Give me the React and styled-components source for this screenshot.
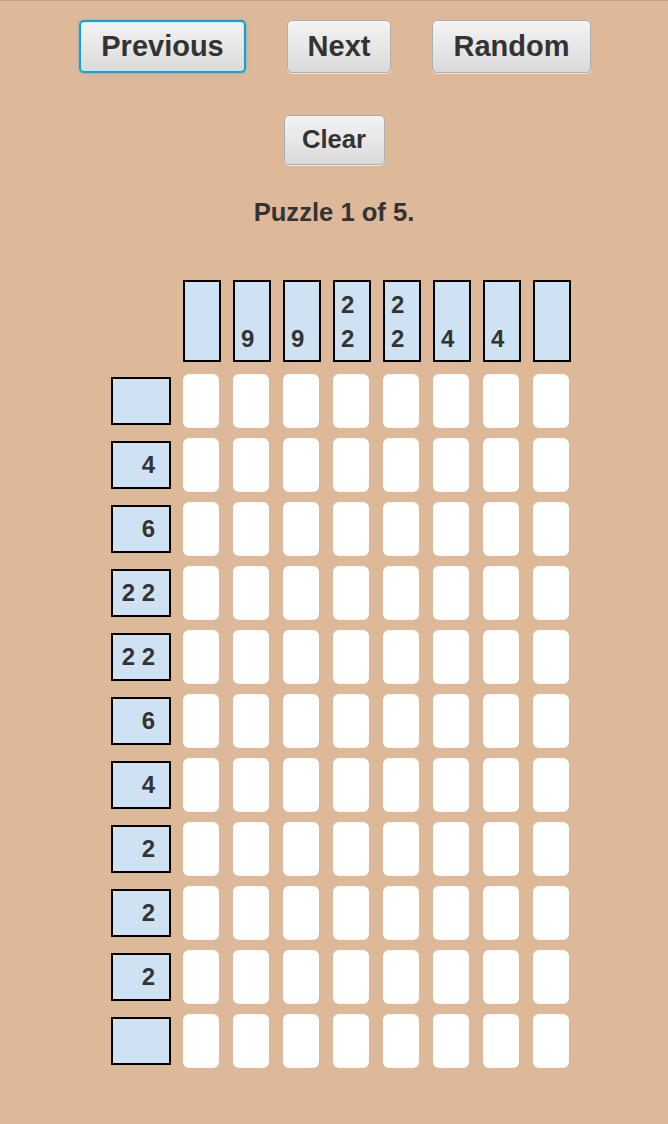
import React from "react";
import styled, { createGlobalStyle, css } from "styled-components";

const GlobalStyle = createGlobalStyle`
  html, body {
    margin: 0;
    padding: 0;
    background: #ddb999;
  }
  body {
    font-family: "Liberation Sans", Arial, sans-serif;
  }
`;

const Page = styled.div`
  box-sizing: border-box;
  width: 668px;
  height: 1124px;
  background: #ddb999;
  border-top: 1px solid #c6a282;
  display: flex;
  flex-direction: column;
  align-items: center;
  color: #333;
`;

const ButtonRow = styled.div`
  display: flex;
  justify-content: center;
  gap: 41px;
  margin-top: 19px;
  padding-left: 2px;
`;

const Button = styled.button`
  box-sizing: border-box;
  width: ${(p) => p.$width}px;
  padding: 0;
  font-family: "Liberation Sans", Arial, sans-serif;
  font-weight: bold;
  color: #333;
  background: linear-gradient(#f3f3f3, #e6e6e6 55%, #d9d9d9);
  border: 1px solid #adadad;
  border-radius: 5px;
  box-shadow: 0 1px 0 rgba(255, 255, 255, 0.65);
  cursor: pointer;
  line-height: 1;

  ${(p) =>
    p.$size === "md"
      ? css`
          height: 50px;
          font-size: 25.6px;
        `
      : css`
          height: 53px;
          font-size: 29px;
        `}

  ${(p) =>
    p.$focused &&
    css`
      border: 2px solid #12a0d6;
      box-shadow: 0 0 2px 1px rgba(60, 170, 220, 0.35),
        inset 0 0 0 1px rgba(200, 230, 240, 0.9);
    `}
`;

const ClearRow = styled.div`
  margin-top: 42px;
`;

const Status = styled.div`
  margin-top: 33px;
  font-size: 25.6px;
  font-weight: bold;
  line-height: 28.6px;
`;

const Board = styled.div`
  align-self: flex-start;
  margin: 53px 0 0 111px;
  display: grid;
  grid-template-columns: 58px repeat(8, 36px);
  grid-template-rows: 84px;
  grid-auto-rows: 54px;
  column-gap: 14px;
  row-gap: 10px;
`;

const Corner = styled.div``;

const ColClue = styled.div`
  box-sizing: border-box;
  width: 38px;
  height: 82px;
  align-self: start;
  background: #cfe2f3;
  border: 2px solid #000;
  display: flex;
  flex-direction: column;
  justify-content: flex-end;
  padding: 0 0 4px 6px;
  font-size: 24px;
  font-weight: bold;
  line-height: 34px;
`;

const RowClue = styled.div`
  box-sizing: border-box;
  width: 60px;
  height: 48px;
  align-self: center;
  background: #cfe2f3;
  border: 2px solid #000;
  padding-right: 14px;
  text-align: right;
  font-size: 24px;
  font-weight: bold;
  line-height: 44px;
  white-space: nowrap;
`;

const Cell = styled.div`
  width: 36px;
  height: 54px;
  background: #fff;
  border-radius: 6px;
`;

const colClues = [[], ["9"], ["9"], ["2", "2"], ["2", "2"], ["4"], ["4"], []];
const rowClues = ["", "4", "6", "2 2", "2 2", "6", "4", "2", "2", "2", ""];

export default function App() {
  return (
    <Page>
      <GlobalStyle />
      <ButtonRow>
        <Button $focused $width={167}>
          Previous
        </Button>
        <Button $width={104}>Next</Button>
        <Button $width={159}>Random</Button>
      </ButtonRow>
      <ClearRow>
        <Button $size="md" $width={101}>
          Clear
        </Button>
      </ClearRow>
      <Status>Puzzle 1 of 5.</Status>
      <Board>
        <Corner />
        {colClues.map((c, i) => (
          <ColClue key={"c" + i}>
            {c.map((n, j) => (
              <span key={j}>{n}</span>
            ))}
          </ColClue>
        ))}
        {rowClues.map((r, i) => (
          <React.Fragment key={"r" + i}>
            <RowClue>{r}</RowClue>
            {colClues.map((_, j) => (
              <Cell key={j} />
            ))}
          </React.Fragment>
        ))}
      </Board>
    </Page>
  );
}
